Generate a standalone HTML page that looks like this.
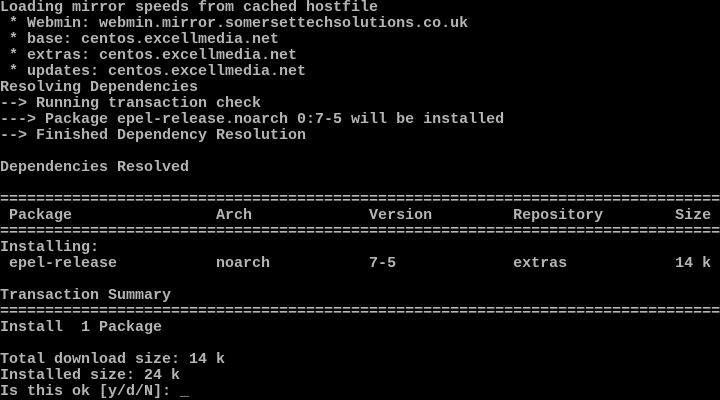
<!DOCTYPE html>
<html><head><meta charset="utf-8"><style>
html,body{margin:0;padding:0;background:#000;width:720px;height:400px;overflow:hidden}
pre{margin:0;font-family:"Liberation Mono",monospace;font-size:15px;line-height:16px;color:#b4b4b4;font-weight:bold;white-space:pre}
</style></head><body><pre>Loading mirror speeds from cached hostfile
 * Webmin: webmin.mirror.somersettechsolutions.co.uk
 * base: centos.excellmedia.net
 * extras: centos.excellmedia.net
 * updates: centos.excellmedia.net
Resolving Dependencies
--&gt; Running transaction check
---&gt; Package epel-release.noarch 0:7-5 will be installed
--&gt; Finished Dependency Resolution

Dependencies Resolved

================================================================================
 Package                Arch             Version         Repository        Size
================================================================================
Installing:
 epel-release           noarch           7-5             extras            14 k

Transaction Summary
================================================================================
Install  1 Package

Total download size: 14 k
Installed size: 24 k
Is this ok [y/d/N]: _</pre></body></html>
